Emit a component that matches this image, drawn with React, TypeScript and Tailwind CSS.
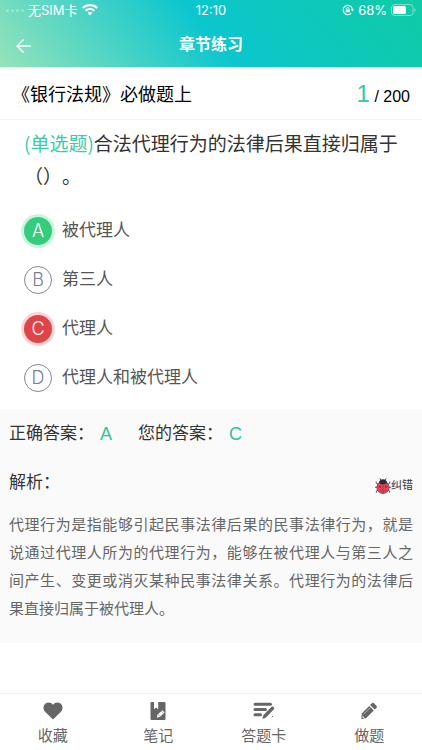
import React from 'react';
import clsx from 'clsx';

type OptionState = 'right' | 'wrong' | 'idle';

interface Option {
    key: string;
    text: string;
    state: OptionState;
}

const options: Option[] = [
    { key: 'A', text: '被代理人', state: 'right' },
    { key: 'B', text: '第三人', state: 'idle' },
    { key: 'C', text: '代理人', state: 'wrong' },
    { key: 'D', text: '代理人和被代理人', state: 'idle' },
];

const badgeStyles: Record<OptionState, string> = {
    right: 'bg-[#35cd7d] text-white ring-3 ring-[#cdf5de]',
    wrong: 'bg-[#df4547] text-white ring-3 ring-[#fbd5d6]',
    idle: 'border border-[#85859a] text-[#7c7c94]',
};

const WifiIcon = () => (
    <svg width="16" height="12" viewBox="0 0 16 12" fill="currentColor" aria-hidden="true">
        <path d="M8 0C4.900 0 2.100 1.200 0 3.200l1.500 1.600C3.200 3.200 5.500 2.200 8 2.200s4.800 1 6.500 2.600L16 3.200C13.900 1.200 11.100 0 8 0z" />
        <path d="M8 4C6 4 4.200 4.800 2.800 6l1.500 1.600C5.300 6.700 6.600 6.100 8 6.100s2.700.6 3.700 1.500L13.200 6C11.800 4.800 10 4 8 4z" />
        <path d="M8 7.900c-.9 0-1.700.3-2.400.9L8 11.500l2.400-2.700c-.7-.6-1.500-.9-2.400-.9z" />
    </svg>
);

const RotationLockIcon = () => (
    <svg width="12" height="12" viewBox="0 0 12 12" fill="none" stroke="currentColor" aria-hidden="true">
        <path d="M9.300 9.200A4.700 4.700 0 1 1 10.500 5.500" strokeWidth="1.100" />
        <path d="M8.900 5.300h3.100l-1.500 2.100z" fill="currentColor" stroke="none" />
        <rect x="3.700" y="5.400" width="4.200" height="2.900" rx=".5" fill="currentColor" stroke="none" />
        <path d="M4.600 5.500V4.700a1.200 1.200 0 0 1 2.400 0v.8" strokeWidth=".8" />
    </svg>
);

const BatteryIcon = () => (
    <svg width="25" height="12" viewBox="0 0 25 12" fill="none" aria-hidden="true">
        <rect x=".5" y=".5" width="21.500" height="11" rx="3" stroke="#fff" strokeOpacity=".45" />
        <rect x="2" y="2" width="13" height="8" rx="1.500" fill="#fff" />
        <path d="M23.300 4.200c.8.300 1.200 1 1.200 1.800s-.4 1.500-1.200 1.800z" fill="#fff" fillOpacity=".5" />
    </svg>
);

const LadybugIcon = () => (
    <svg width="16" height="16" viewBox="0 0 16 16" aria-hidden="true">
        <g fill="none" stroke="#4a3d48" strokeWidth=".9" strokeLinecap="round">
            <path d="M6 2.400 5 .6M10 2.400l1-1.800" />
            <path d="M2.800 6 1.200 5.200V4M2 9.300H.4M2.800 12.200l-1.400.8v1.300" />
            <path d="m13.200 6 1.600-.8V4M14 9.300h1.600M13.200 12.200l1.400.8v1.300" />
        </g>
        <ellipse cx="8" cy="9.400" rx="6.200" ry="6.100" fill="#ea4359" stroke="#4a3040" strokeWidth=".6" />
        <path d="M3.800 5C4.200 2.600 5.900 1.300 8 1.300S11.800 2.600 12.200 5C11 5.900 9.500 6.200 8 6.200S5 5.900 3.800 5z" fill="#2b2a3d" />
        <path d="M8 6v9.300" stroke="#7a2c40" strokeWidth=".6" />
        <g fill="#b02a40">
            <circle cx="5" cy="8.800" r="1.200" />
            <circle cx="11" cy="8.800" r="1.200" />
            <circle cx="5.800" cy="12.300" r=".7" />
            <circle cx="10.200" cy="12.300" r=".7" />
        </g>
    </svg>
);

const HeartIcon = () => (
    <svg width="20" height="18" viewBox="0 0 20 18" fill="currentColor" aria-hidden="true">
        <path d="M10 17.600 2.300 10C-.1 7.600 0 4.100 2 2.100 4.200-.1 7.900 0 10 2.800 12.100 0 15.800-.1 18 2.100c2 2 2.100 5.500-.3 7.900z" />
    </svg>
);

const NoteIcon = () => (
    <svg width="18" height="18" viewBox="0 0 18 18" aria-hidden="true">
        <path d="M2.500 0H5v7.200L7.100 5.500l2.100 1.700V0h6.300a1 1 0 0 1 1 1v16a1 1 0 0 1-1 1h-13a1 1 0 0 1-1-1V1a1 1 0 0 1 1-1z" fill="currentColor" />
        <path d="m7.800 15.700.9-3.300 4.600-4.200 2.300 2.300-4.500 4.300z" fill="#fff" />
        <path d="m9.500 12.300 1.800 1.900M12.300 9.200l2.200 2.200" stroke="currentColor" strokeWidth=".6" />
    </svg>
);

const AnswerCardIcon = () => (
    <svg width="22" height="18" viewBox="0 0 22 18" fill="none" stroke="currentColor" strokeLinecap="round" aria-hidden="true">
        <path d="M2 2.300h15.500M2 7.500h10.500M2 12.700h5.500" strokeWidth="3" />
        <path d="M19.500 6.200 12 14" strokeWidth="3.400" />
        <path d="m9.300 16.700.9-3.300 2.600 2.500z" fill="currentColor" stroke="none" />
        <path d="M19.500 14.500h.1" strokeWidth="1" />
    </svg>
);

const PencilIcon = () => (
    <svg width="18" height="18" viewBox="0 0 18 18" aria-hidden="true">
        <path d="M11.800 1.300a1.500 1.500 0 0 1 2.200 0l2.400 2.400a1.500 1.500 0 0 1 0 2.200l-1.700 1.700L10 3z" fill="currentColor" />
        <path d="m9.200 3.900 4.600 4.600-7.600 7.600-4.900.8.500-5.300z" fill="currentColor" />
        <path d="m10 5.900-6.300 6.300" stroke="#fff" strokeOpacity=".7" strokeWidth=".7" />
        <path d="m2.500 13.700 1.900 1.900-1.700.3z" fill="#fff" />
    </svg>
);

const tabs = [
    { label: '收藏', icon: <HeartIcon /> },
    { label: '笔记', icon: <NoteIcon /> },
    { label: '答题卡', icon: <AnswerCardIcon /> },
    { label: '做题', icon: <PencilIcon /> },
];

const StatusBar = () => (
    <div className="grid h-5 grid-cols-3 items-center px-1.5 font-[Inter,'Noto_Sans_CJK_SC',sans-serif] text-[13px] leading-5">
        <div className="flex items-center gap-1">
            <span className="flex w-[18px] justify-between opacity-30">
                {[0, 1, 2, 3].map((dot) => (
                    <i key={dot} className="size-[3px] rounded-full bg-white" />
                ))}
            </span>
            <span>无SIM卡</span>
            <WifiIcon />
        </div>
        <time className="text-center">12:10</time>
        <div className="flex items-center justify-end gap-1">
            <RotationLockIcon />
            <span>68%</span>
            <BatteryIcon />
        </div>
    </div>
);

const App: React.FC = () => {
    return (
        <div className="flex min-h-screen flex-col bg-white font-['Liberation_Sans','Noto_Sans_CJK_SC',sans-serif]">
            <header className="border-b border-[#d5f8fa] bg-[linear-gradient(50deg,#96e3ba_0%,#0bc6ce_50%,#10cba4_100%)] text-white">
                <StatusBar />
                <div className="grid h-[47px] grid-cols-[1fr_auto_1fr] items-center px-4">
                    <button aria-label="返回" className="justify-self-start">
                        <svg width="16" height="16" viewBox="0 0 16 16" fill="none" stroke="currentColor" strokeWidth="1.300" className="mt-1">
                            <path d="M15 8H1M7.500 1.500 1 8l6.500 6.500" />
                        </svg>
                    </button>
                    <h1 className="pt-0.5 text-base font-bold">章节练习</h1>
                </div>
            </header>

            <main>
                <div className="flex h-[52px] items-center justify-between border-b border-[#f3f3f3] px-3 text-black">
                    <h2 className="pt-0.5 text-lg">《银行法规》必做题上</h2>
                    <p className="text-base">
                        <span className="text-2xl text-[#35c8a4]">1</span> / 200
                    </p>
                </div>

                <section className="px-6 pt-1.5 pb-[7px]">
                    <p className="font-['Noto_Sans_CJK_SC',sans-serif] text-[19px] leading-[33px] text-[#333] [text-spacing-trim:space-all]">
                        <span className="text-[#3ccbaa]">(单选题)</span>
                        <span>合法代理行为的法律后果直接归属于</span>
                        <span>（）。</span>
                    </p>
                    <div className="mt-3.5">
                        {options.map((option) => (
                            <button key={option.key} className="flex h-[49px] w-full items-center gap-2.5 text-left text-[17px] text-[#555]">
                                <span
                                    className={clsx(
                                        'flex size-7 items-center justify-center rounded-full font-[Inter,sans-serif] text-lg font-light',
                                        badgeStyles[option.state],
                                    )}
                                >
                                    {option.key}
                                </span>
                                {option.text}
                            </button>
                        ))}
                    </div>
                </section>

                {/* Answer + explanation */}
                <section className="bg-[#fafafa] px-[9px] pb-5 text-[17px] text-[#333]">
                    <div className="flex h-[49px] items-center gap-[26px]">
                        <p className="flex items-center gap-1.5">
                            正确答案：<span className="text-lg text-[#2fc595]">A</span>
                        </p>
                        <p className="flex items-center gap-1.5">
                            您的答案：<span className="text-lg text-[#2fc595]">C</span>
                        </p>
                    </div>
                    <div className="flex h-[49px] items-center justify-between">
                        <h3>解析：</h3>
                        <button className="flex items-center pt-1.5 text-[11px]">
                            <LadybugIcon />
                            纠错
                        </button>
                    </div>
                    <p className="pt-1 text-justify text-[15px] leading-7 text-[#666]">
                        代理行为是指能够引起民事法律后果的民事法律行为，就是说通过代理人所为的代理行为，能够在被代理人与第三人之间产生、变更或消灭某种民事法律关系。代理行为的法律后果直接归属于被代理人。
                    </p>
                </section>
            </main>

            <nav className="mt-auto grid grid-cols-4 border-t border-[#f0f0f0] pt-2 pb-1 text-[15px] leading-5 text-[#666]">
                {tabs.map((tab) => (
                    <button key={tab.label} className="flex flex-col items-center gap-1.5">
                        {tab.icon}
                        {tab.label}
                    </button>
                ))}
            </nav>
        </div>
    );
};

export default App;
